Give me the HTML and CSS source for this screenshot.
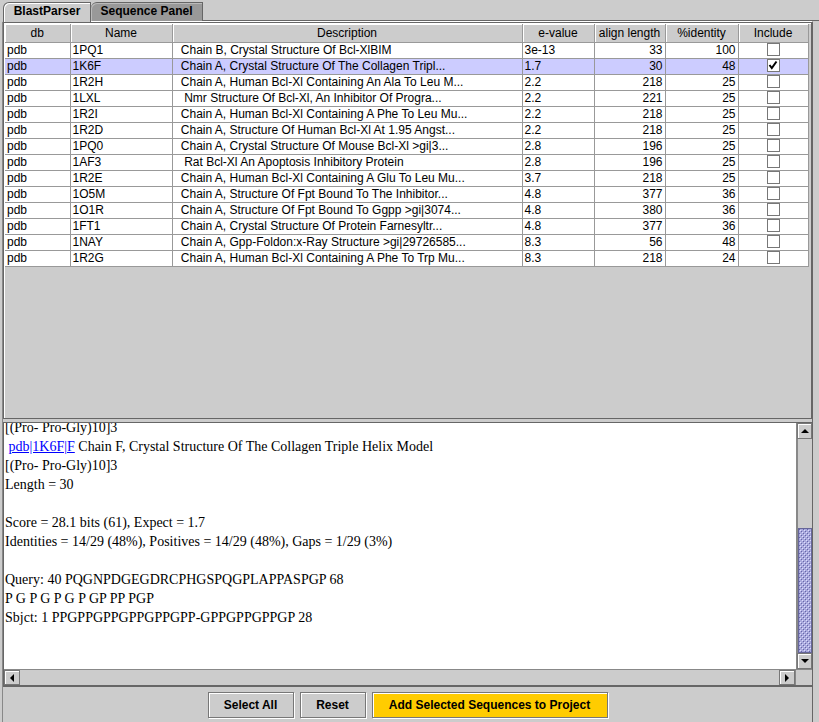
FILE: index.html
```html
<!DOCTYPE html>
<html>
<head>
<meta charset="utf-8">
<link rel="stylesheet" href="styles.css">
</head>
<body>
<div class="tabbar">
  <div class="tab active">BlastParser</div>
  <div class="tab">Sequence Panel</div>
  <div class="tabline"></div>
</div>
<div class="panel">
  <div class="tablepane">
    <table class="grid">
      <colgroup>
        <col style="width:65px"><col style="width:102px"><col style="width:350px"><col style="width:72px"><col style="width:71px"><col style="width:73px"><col style="width:70px">
      </colgroup>
      <thead>
        <tr><th>db</th><th>Name</th><th>Description</th><th>e-value</th><th>align length</th><th>%identity</th><th>Include</th></tr>
      </thead>
      <tbody>
        <tr><td>pdb</td><td>1PQ1</td><td class="desc"> Chain B, Crystal Structure Of Bcl-XlBIM</td><td>3e-13</td><td class="num">33</td><td class="num">100</td><td class="chk"><span class="box"></span></td></tr>
        <tr class="sel"><td>pdb</td><td>1K6F</td><td class="desc"> Chain A, Crystal Structure Of The Collagen Tripl...</td><td>1.7</td><td class="num">30</td><td class="num">48</td><td class="chk"><span class="box checked"><svg width="10" height="10" viewBox="0 0 10 10"><path d="M1.5 5 L3.8 8 L8.5 1.5" fill="none" stroke="#000" stroke-width="2"/></svg></span></td></tr>
        <tr><td>pdb</td><td>1R2H</td><td class="desc"> Chain A, Human Bcl-Xl Containing An Ala To Leu M...</td><td>2.2</td><td class="num">218</td><td class="num">25</td><td class="chk"><span class="box"></span></td></tr>
        <tr><td>pdb</td><td>1LXL</td><td class="desc">  Nmr Structure Of Bcl-Xl, An Inhibitor Of Progra...</td><td>2.2</td><td class="num">221</td><td class="num">25</td><td class="chk"><span class="box"></span></td></tr>
        <tr><td>pdb</td><td>1R2I</td><td class="desc"> Chain A, Human Bcl-Xl Containing A Phe To Leu Mu...</td><td>2.2</td><td class="num">218</td><td class="num">25</td><td class="chk"><span class="box"></span></td></tr>
        <tr><td>pdb</td><td>1R2D</td><td class="desc"> Chain A, Structure Of Human Bcl-Xl At 1.95 Angst...</td><td>2.2</td><td class="num">218</td><td class="num">25</td><td class="chk"><span class="box"></span></td></tr>
        <tr><td>pdb</td><td>1PQ0</td><td class="desc"> Chain A, Crystal Structure Of Mouse Bcl-Xl &gt;gi|3...</td><td>2.8</td><td class="num">196</td><td class="num">25</td><td class="chk"><span class="box"></span></td></tr>
        <tr><td>pdb</td><td>1AF3</td><td class="desc">  Rat Bcl-Xl An Apoptosis Inhibitory Protein</td><td>2.8</td><td class="num">196</td><td class="num">25</td><td class="chk"><span class="box"></span></td></tr>
        <tr><td>pdb</td><td>1R2E</td><td class="desc"> Chain A, Human Bcl-Xl Containing A Glu To Leu Mu...</td><td>3.7</td><td class="num">218</td><td class="num">25</td><td class="chk"><span class="box"></span></td></tr>
        <tr><td>pdb</td><td>1O5M</td><td class="desc"> Chain A, Structure Of Fpt Bound To The Inhibitor...</td><td>4.8</td><td class="num">377</td><td class="num">36</td><td class="chk"><span class="box"></span></td></tr>
        <tr><td>pdb</td><td>1O1R</td><td class="desc"> Chain A, Structure Of Fpt Bound To Ggpp &gt;gi|3074...</td><td>4.8</td><td class="num">380</td><td class="num">36</td><td class="chk"><span class="box"></span></td></tr>
        <tr><td>pdb</td><td>1FT1</td><td class="desc"> Chain A, Crystal Structure Of Protein Farnesyltr...</td><td>4.8</td><td class="num">377</td><td class="num">36</td><td class="chk"><span class="box"></span></td></tr>
        <tr><td>pdb</td><td>1NAY</td><td class="desc"> Chain A, Gpp-Foldon:x-Ray Structure &gt;gi|29726585...</td><td>8.3</td><td class="num">56</td><td class="num">48</td><td class="chk"><span class="box"></span></td></tr>
        <tr><td>pdb</td><td>1R2G</td><td class="desc"> Chain A, Human Bcl-Xl Containing A Phe To Trp Mu...</td><td>8.3</td><td class="num">218</td><td class="num">24</td><td class="chk"><span class="box"></span></td></tr>
      </tbody>
    </table>
  </div>
  <div class="textpane">
    <div class="textrow">
      <div class="viewport">
        <div class="doc">
          <div class="line">[(Pro- Pro-Gly)10]3</div>
          <div class="line">&nbsp;<a class="link">pdb|1K6F|F</a> Chain F, Crystal Structure Of The Collagen Triple Helix Model</div>
          <div class="line">[(Pro- Pro-Gly)10]3</div>
          <div class="line">Length = 30</div>
          <div class="line">&nbsp;</div>
          <div class="line">Score = 28.1 bits (61), Expect = 1.7</div>
          <div class="line">Identities = 14/29 (48%), Positives = 14/29 (48%), Gaps = 1/29 (3%)</div>
          <div class="line">&nbsp;</div>
          <div class="line">Query: 40 PQGNPDGEGDRCPHGSPQGPLAPPASPGP 68</div>
          <div class="line">P G P G P G P GP PP PGP</div>
          <div class="line">Sbjct: 1 PPGPPGPPGPPGPPGPP-GPPGPPGPPGP 28</div>
        </div>
      </div>
      <div class="vscroll">
        <div class="arrowbtn"><span class="tri up"></span></div>
        <div class="track"><div class="thumb"></div></div>
        <div class="arrowbtn"><span class="tri down"></span></div>
      </div>
    </div>
    <div class="hscroll">
      <div class="arrowbtn h"><span class="tri left"></span></div>
      <div class="htrack"></div>
      <div class="arrowbtn h"><span class="tri right"></span></div>
      <div class="corner"></div>
    </div>
  </div>
  <div class="buttons">
    <button class="btn">Select All</button>
    <button class="btn">Reset</button>
    <button class="btn primary">Add Selected Sequences to Project</button>
  </div>
</div>
</body>
</html>
```
FILE: styles.css
```css
html, body {
  margin: 0;
  padding: 0;
}
body {
  background: #cccccc;
  width: 819px;
  height: 722px;
  overflow: hidden;
  font-family: "Liberation Sans", Arial, sans-serif;
  font-size: 12px;
  color: #000;
}
.tabbar {
  height: 21px;
  display: flex;
  align-items: flex-end;
  padding-left: 3px;
  box-sizing: border-box;
}
.tab {
  height: 19px;
  box-sizing: border-box;
  border: 1px solid #666;
  border-bottom: none;
  font-weight: bold;
  font-size: 12px;
  line-height: 17px;
  text-align: center;
  background: #999999;
  border-top-left-radius: 6px;
  box-shadow: inset 1px 1px 0 #bbbbbb;
}
.tab.active {
  width: 88px;
  background: #cccccc;
  box-shadow: inset 1px 1px 0 #ffffff;
  height: 20px;
  position: relative;
  z-index: 1;
  margin-bottom: -1px;
}
.tab:nth-child(2) {
  width: 112px;
  margin-left: 0;
  border-left: none;
}
.tabline {
  flex: 1;
  height: 1px;
  background: #666;
}
.panel {
  margin-left: 2px;
  width: 811px;
  height: 701px;
  border-left: 1px solid #888;
  border-right: 1px solid #666;
  border-top: 1px solid #fff;
  box-sizing: border-box;
  display: flex;
  flex-direction: column;
}
.tablepane {
  height: 397px;
  border: 1px solid #666;
  box-shadow: inset 1px 1px 0 #fff;
  box-sizing: border-box;
  padding: 1px 0 0 1px;
  overflow: hidden;
}
.grid {
  border-collapse: collapse;
  table-layout: fixed;
  width: 803px;
  font-size: 12px;
}
.grid th {
  font-weight: normal;
  height: 18px;
  padding: 2px 0 0 0;
  box-sizing: border-box;
  background: #cccccc;
  border-right: 1px solid #999;
  border-bottom: 1px solid #999;
  box-shadow: inset 1px 1px 0 #fff;
  text-align: center;
  line-height: 15px;
}
.grid td {
  height: 16px;
  padding: 0 2px;
  box-sizing: border-box;
  background: #fff;
  border-right: 1px solid #999;
  border-bottom: 1px solid #999;
  line-height: 15px;
  white-space: pre;
  overflow: hidden;
}
.grid tr.sel td {
  background: #ccccff;
}
.grid td.num {
  text-align: right;
}
.grid td.desc {
  padding-left: 5px;
}
.grid td.chk {
  text-align: center;
  padding: 0;
}
.box {
  display: inline-block;
  width: 13px;
  height: 13px;
  box-sizing: border-box;
  border: 1px solid #777;
  background: #fff;
  vertical-align: middle;
  margin-top: -2px;
  position: relative;
}
.box svg {
  position: absolute;
  left: 0;
  top: 0;
}
.textpane {
  margin-top: 3px;
  height: 264px;
  border: 1px solid #666;
  box-sizing: border-box;
  display: flex;
  flex-direction: column;
  margin-right: -1px;
}
.textrow {
  flex: 1;
  display: flex;
  min-height: 0;
}
.viewport {
  flex: 1;
  background: #fff;
  overflow: hidden;
  position: relative;
}
.doc {
  font-family: "Liberation Serif", "Times New Roman", serif;
  font-size: 14px;
  margin-top: -5px;
  padding-left: 1px;
}
.line {
  height: 19px;
  line-height: 19px;
  white-space: nowrap;
}
.link {
  color: #0000ff;
  text-decoration: underline;
}
.vscroll {
  width: 16px;
  display: flex;
  flex-direction: column;
  background: #cccccc;
  border-left: 1px solid #888;
  box-sizing: border-box;
}
.arrowbtn {
  height: 16px;
  box-sizing: border-box;
  border: 1px solid #777;
  box-shadow: inset 1px 1px 0 #fff;
  background: #cccccc;
  display: flex;
  align-items: center;
  justify-content: center;
  flex: none;
}
.track {
  flex: 1;
  position: relative;
  border-left: 1px solid #888;
}
.thumb {
  position: absolute;
  left: 0;
  right: 0;
  bottom: 0;
  height: 125px;
  box-sizing: border-box;
  border: 1px solid #666699;
  background-color: #aaaadd;
  background-image: conic-gradient(from 270deg at 1px 1px, #ddddff 25%, transparent 0),
                    conic-gradient(from 270deg at 1px 1px, #ddddff 25%, transparent 0),
                    conic-gradient(from 270deg at 1px 1px, #6666aa 25%, transparent 0),
                    conic-gradient(from 270deg at 1px 1px, #6666aa 25%, transparent 0);
  background-size: 4px 4px;
  background-position: 1px 1px, 3px 3px, 2px 2px, 4px 4px;
}
.tri {
  width: 0;
  height: 0;
  border: 4px solid transparent;
}
.tri.up {
  border-bottom: 4px solid #000;
  border-top: none;
}
.tri.down {
  border-top: 4px solid #000;
  border-bottom: none;
}
.tri.left {
  border-right: 4px solid #000;
  border-left: none;
}
.tri.right {
  border-left: 4px solid #000;
  border-right: none;
}
.hscroll {
  height: 16px;
  display: flex;
  background: #cccccc;
  border-top: 1px solid #888;
  box-sizing: border-box;
  flex: none;
}
.arrowbtn.h {
  width: 16px;
  height: 15px;
}
.htrack {
  flex: 1;
}
.corner {
  width: 16px;
  border-left: 1px solid #888;
}
.buttons {
  flex: 1;
  display: flex;
  justify-content: center;
  align-items: flex-start;
  gap: 6px;
  padding-top: 5px;
  border-top: 1px solid #666;
}
.btn {
  height: 26px;
  box-sizing: border-box;
  border: 1px solid #777;
  box-shadow: inset 1px 1px 0 #fff, 1px 1px 0 #fff;
  background: #cccccc;
  font-family: "Liberation Sans", Arial, sans-serif;
  font-weight: bold;
  font-size: 12px;
  color: #000;
  padding: 0;
  margin: 0;
}
.btn:nth-child(1) { width: 86px; }
.btn:nth-child(2) { width: 66px; }
.btn.primary {
  width: 236px;
  background: #ffcc00;
}
```
